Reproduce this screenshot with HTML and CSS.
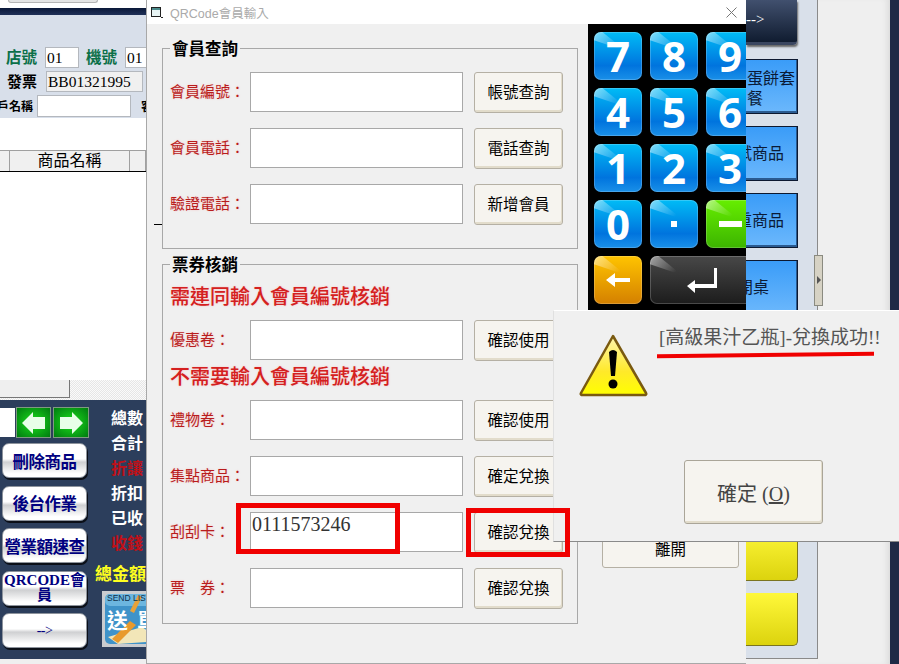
FILE: index.html
```html
<!DOCTYPE html>
<html>
  <head>
    <title>QRCode會員輸入</title>
    <link rel="stylesheet" href="styles.css">
  </head>
  <body>
    <div class="desktop">
      <!-- POS window behind the dialogs -->
      <div class="app">
        <div class="appLeft">
          <div class="topStrip"><div class="topTab"></div></div>
          <div class="navyBar"></div>
          <div class="infoPanel">
            <div class="infoRow">
              <span class="greenLabel">店號</span>
              <div class="infoField shopField">01</div>
              <span class="greenLabel">機號</span>
              <div class="infoField machineField">01</div>
            </div>
            <div class="infoRow invoiceRow">
              <span class="blackLabel">發票</span>
              <div class="infoField invoiceField">BB01321995</div>
            </div>
            <div class="infoRow customerRow">
              <span class="smallLabel">客戶名稱</span>
              <div class="infoField customerField"></div>
              <span class="smallLabel">客</span>
            </div>
          </div>
          <div class="whiteGap"></div>
          <div class="tableHead">
            <div class="headCell firstCell"></div>
            <div class="headCell nameCell">商品名稱</div>
            <div class="headCell"></div>
          </div>
          <div class="tableBody"></div>
          <div class="scrollRow"><div class="scrollThumb"></div></div>
          <div class="darkPanel">
            <div class="actionColumn">
              <div class="arrowRow">
                <div class="arrowBlank"></div>
                <div class="greenArrow">
                  <svg width="24" height="22" viewBox="0 0 24 22"><polygon points="0,11 11,0 11,5 23,5 23,17 11,17 11,22" fill="#e8ffe8"/></svg>
                </div>
                <div class="greenArrow">
                  <svg width="24" height="22" viewBox="0 0 24 22"><polygon points="24,11 13,0 13,5 1,5 1,17 13,17 13,22" fill="#e8ffe8"/></svg>
                </div>
              </div>
              <div class="actionBtn">刪除商品</div>
              <div class="actionBtn">後台作業</div>
              <div class="actionBtn">營業額速查</div>
              <div class="actionBtn wrapBtn">QRCODE會員</div>
              <div class="actionBtn arrowBtn">--&gt;</div>
            </div>
            <div class="totalsColumn">
              <div class="totalLine">總數</div>
              <div class="totalLine">合計</div>
              <div class="totalLine redLine">折讓</div>
              <div class="totalLine">折扣</div>
              <div class="totalLine">已收</div>
              <div class="totalLine redLine">收錢</div>
              <div class="grandTotal">總金額</div>
              <div class="sendCard">
                <svg width="70" height="56" viewBox="0 0 70 56">
                  <rect x="0" y="0" width="70" height="56" fill="#c9ccd0"/>
                  <rect x="3" y="3" width="64" height="50" rx="5" fill="#3f93c9"/>
                  <rect x="3" y="3" width="64" height="12" rx="5" fill="#6cb6df"/>
                  <polygon points="6,46 40,36 60,50 16,53" fill="#f2e6b8"/>
                  <polygon points="10,48 28,30 34,34 16,52" fill="#e89a2c"/>
                  <polygon points="28,20 36,4 40,6 32,22" fill="#e8a23a"/>
                  <text x="5" y="10" class="sendText">SEND LIST</text>
                  <text x="5" y="37" class="sendBig">送</text>
                  <text x="35" y="37" class="sendBig">單</text>
                </svg>
              </div>
            </div>
          </div>
        </div>
        <div class="appMiddle"></div>
        <div class="toolPanel">
          <div class="darkTool">--&gt;</div>
          <div class="blueTool wrapTool">蛋餅套餐</div>
          <div class="blueTool">試商品</div>
          <div class="blueTool">重商品</div>
          <div class="blueTool shortTool">開桌</div>
          <div class="yellowTool firstYellow"></div>
          <div class="yellowTool"></div>
          <div class="panelHandle"></div>
        </div>
        <div class="appMargin"></div>
        <div class="appEdge"></div>
      </div>

      <!-- QR code member dialog -->
      <div class="qrDialog">
        <div class="titleBar">
          <svg class="titleIcon" width="14" height="13" viewBox="0 0 14 13">
            <rect x="1.5" y="1.5" width="9" height="9" fill="#e8f4f4" stroke="#222"/>
            <rect x="2" y="2" width="8" height="2" fill="#4a8a8a"/>
            <path d="M11 11h2v1h-2z" fill="#222"/>
          </svg>
          <span class="titleText">QRCode會員輸入</span>
          <svg class="closeIcon" width="11" height="11" viewBox="0 0 11 11">
            <path d="M.5.5l10 10M10.5.5l-10 10" stroke="#777" fill="none"/>
          </svg>
        </div>
        <div class="qrBody">
          <div class="qrMain">
            <fieldset class="group">
              <legend>會員查詢</legend>
              <div class="row">
                <label class="rowLabel">會員編號：</label>
                <input class="rowInput" type="text">
                <button class="rowBtn">帳號查詢</button>
              </div>
              <div class="row">
                <label class="rowLabel">會員電話：</label>
                <input class="rowInput" type="text">
                <button class="rowBtn">電話查詢</button>
              </div>
              <div class="row">
                <label class="rowLabel">驗證電話：</label>
                <input class="rowInput" type="text">
                <button class="rowBtn">新增會員</button>
              </div>
            </fieldset>
            <fieldset class="group ticketGroup">
              <legend>票券核銷</legend>
              <div class="redHeading">需連同輸入會員編號核銷</div>
              <div class="row">
                <label class="rowLabel">優惠卷：</label>
                <input class="rowInput" type="text">
                <button class="rowBtn">確認使用</button>
              </div>
              <div class="redHeading">不需要輸入會員編號核銷</div>
              <div class="row">
                <label class="rowLabel">禮物卷：</label>
                <input class="rowInput" type="text">
                <button class="rowBtn">確認使用</button>
              </div>
              <div class="row">
                <label class="rowLabel">集點商品：</label>
                <input class="rowInput" type="text">
                <button class="rowBtn">確定兌換</button>
              </div>
              <div class="row">
                <label class="rowLabel">刮刮卡：</label>
                <input class="rowInput filledInput" type="text" value="0111573246">
                <button class="rowBtn">確認兌換</button>
              </div>
              <div class="row">
                <label class="rowLabel">票　券：</label>
                <input class="rowInput" type="text">
                <button class="rowBtn">確認兌換</button>
              </div>
            </fieldset>
          </div>
          <div class="qrSide">
            <div class="keypad">
              <div class="key">7</div>
              <div class="key">8</div>
              <div class="key">9</div>
              <div class="key">4</div>
              <div class="key">5</div>
              <div class="key">6</div>
              <div class="key">1</div>
              <div class="key">2</div>
              <div class="key">3</div>
              <div class="key">0</div>
              <div class="key"><span class="dotMark"></span></div>
              <div class="key greenKey"><span class="minusMark"></span></div>
              <div class="key orangeKey">
                <svg width="24" height="14" viewBox="0 0 24 14"><polygon points="0,7 9,0 9,5 24,5 24,9 9,9 9,14" fill="#fff"/></svg>
              </div>
              <div class="key enterKey">
                <svg width="31" height="25" viewBox="0 0 31 25"><polygon points="0,18 8,12 8,16 27,16 27,0 30,0 30,20 8,20 8,25" fill="#fff"/></svg>
              </div>
            </div>
            <button class="leaveBtn">離開</button>
          </div>
        </div>
        <div class="strayDash"></div>
      </div>

      <!-- message box -->
      <div class="msgBox">
        <div class="msgTop">
          <svg class="warnIcon" width="70" height="64" viewBox="0 0 70 64">
            <defs>
              <linearGradient id="warnFill" x1="0" y1="0" x2="0" y2="1">
                <stop offset="0" stop-color="#fff6b0"/>
                <stop offset="0.6" stop-color="#ffe92a"/>
                <stop offset="1" stop-color="#ffff00"/>
              </linearGradient>
            </defs>
            <path d="M34 2 L67 59 Q68 61 65 61 L4 61 Q1 61 2 59 Z" fill="url(#warnFill)" stroke="#7a5a10" stroke-width="2.5" stroke-linejoin="round"/>
            <path d="M30 18 Q34 14 38 18 L36 42 L32 42 Z" fill="#000"/>
            <circle cx="34" cy="50" r="4.5" fill="#000"/>
          </svg>
          <div class="msgText">[高級果汁乙瓶]-兌換成功!!</div>
        </div>
        <button class="msgBtn">確定 (<u>O</u>)</button>
      </div>

      <!-- red marks drawn on the screenshot -->
      <div class="redBox inputMark"></div>
      <div class="redBox buttonMark"></div>
      <div class="redLineMark"></div>
    </div>
  </body>
</html>
```

FILE: styles.css
```css
/* General Styles */
html, body {
  margin: 0;
  padding: 0;
}

body {
  background-color: #efefef;
  font-family: 'Liberation Serif', 'Noto Sans CJK TC', serif;
  color: #000000;
}

.desktop {
  position: relative;
  width: 899px;
  height: 664px;
  overflow: hidden;
}

/* POS window */
.app {
  display: flex;
  height: 664px;
  background-color: #efefef;
}

.appLeft {
  display: flex;
  flex-direction: column;
  width: 146px;
  height: 659px;
  overflow: hidden;
  flex-shrink: 0;
}

.appMiddle {
  width: 600px;
  flex-shrink: 0;
}

.topStrip {
  height: 8px;
  background-color: #ffffff;
}

.topTab {
  width: 88px;
  height: 2px;
  margin-left: 8px;
  background-color: #e4e4e4;
  border: 1px solid #b5b5b5;
  border-top: none;
  border-radius: 0 0 4px 4px;
}

.navyBar {
  height: 7px;
  background: linear-gradient(#0a1838, #1f3058);
}

.infoPanel {
  display: flex;
  flex-direction: column;
  gap: 3px;
  height: 103px;
  box-sizing: border-box;
  padding-top: 32px;
  background-color: #d8dfea;
}

.infoRow {
  display: flex;
  align-items: center;
  height: 21px;
  white-space: nowrap;
}

.infoRow:first-child {
  padding-left: 6px;
}

.greenLabel {
  font-size: 15.5px;
  font-weight: bold;
  color: #0b7048;
  margin: 0 8px 3px 0;
  flex-shrink: 0;
}

.shopField {
  margin-right: 7px;
}

.blackLabel {
  font-size: 15px;
  font-weight: bold;
  margin: 0 9px 3px 0;
}

.invoiceRow {
  padding-left: 7px;
}

.smallLabel {
  font-size: 12px;
  font-weight: bold;
  flex-shrink: 0;
}

.customerRow {
  height: 22px;
  margin-left: -15px;
}

.infoField {
  box-sizing: border-box;
  height: 21px;
  padding-left: 1px;
  background-color: #ffffff;
  border: 1px solid #b4b8be;
  font-size: 15.5px;
  line-height: 19px;
  flex-shrink: 0;
}

.shopField { width: 34px; }
.machineField { width: 40px; }

.invoiceField {
  width: 97px;
  background-color: #f0f0f0;
}

.customerField {
  width: 94px;
  height: 22px;
  margin: 0 10px 0 4px;
}

.whiteGap {
  height: 32px;
  background-color: #ffffff;
}

.tableHead {
  display: flex;
  height: 22px;
  box-sizing: border-box;
  background-color: #f0f0f0;
  border-top: 1px solid #a0a0a0;
  border-bottom: 1px solid #000000;
}

.headCell {
  flex: 1;
  border-right: 1px solid #a0a0a0;
  font-size: 16px;
  line-height: 20px;
  text-align: center;
}

.firstCell { flex: 0 0 10px; box-sizing: border-box; }
.nameCell { flex: 0 0 120px; box-sizing: border-box; }

.tableBody {
  flex: 1;
  background-color: #ffffff;
}

.scrollRow {
  height: 20px;
  background: repeating-conic-gradient(#e6e6e6 0 25%, #fafafa 0 50%) 0 0 / 2px 2px;
}

.scrollThumb {
  width: 70px;
  height: 18px;
  box-sizing: border-box;
  background-color: #efefef;
  border-right: 1px solid #777777;
  border-bottom: 1px solid #777777;
}

/* Dark panel at the bottom left */
.darkPanel {
  display: flex;
  height: 259px;
  background-color: #2c3e5c;
}

.actionColumn {
  display: flex;
  flex-direction: column;
  gap: 7.5px;
  width: 91px;
  flex-shrink: 0;
  padding-top: 7px;
}

.arrowRow {
  display: flex;
  align-items: center;
  height: 31px;
  margin-bottom: -2.5px;
}

.arrowBlank {
  width: 15px;
  height: 29px;
  margin-right: 1px;
  background-color: #ffffff;
}

.greenArrow {
  display: flex;
  justify-content: center;
  align-items: center;
  width: 36px;
  height: 31px;
  box-sizing: border-box;
  margin-right: 2px;
  background: radial-gradient(#1ce01c, #007a10);
  border: 1px solid #7f9a80;
}

.actionBtn {
  display: flex;
  justify-content: center;
  align-items: center;
  box-sizing: border-box;
  width: 85px;
  height: 35px;
  margin-left: 2px;
  background: linear-gradient(#ffffff 0%, #ffffff 45%, #cfd0d2 55%, #ffffff 90%);
  border: 1px solid #8d939c;
  border-radius: 7px;
  box-shadow: 1px 2px 0 #0b0f18;
  font-size: 16.5px;
  font-weight: bold;
  color: #000080;
  white-space: nowrap;
  letter-spacing: -0.5px;
}

.wrapBtn {
  font-size: 15px;
  line-height: 15px;
  white-space: normal;
  text-align: center;
  word-break: break-all;
  letter-spacing: 0;
}

.arrowBtn {
  font-size: 14px;
  font-weight: normal;
}

.totalsColumn {
  flex-shrink: 0;
  width: 80px;
  margin-left: 4px;
  padding-top: 7px;
}

.totalLine {
  height: 25px;
  line-height: 24px;
  padding-left: 16px;
  font-size: 16px;
  font-weight: bold;
  color: #ffffff;
  white-space: nowrap;
}

.redLine {
  color: #c01018;
}

.grandTotal {
  height: 28px;
  margin-top: 6px;
  line-height: 24px;
  font-size: 17px;
  font-weight: bold;
  color: #ffff20;
  white-space: nowrap;
}

.sendCard {
  margin-left: 7px;
  height: 56px;
}

.sendCard svg {
  display: block;
}

.sendText {
  font-family: 'Liberation Sans', sans-serif;
  font-size: 8.5px;
  fill: #10304a;
}

.sendBig {
  font-family: 'Noto Sans CJK TC', sans-serif;
  font-size: 21px;
  font-weight: bold;
  fill: #ffffff;
}

/* Tool buttons at the right */
.toolPanel {
  position: relative;
  display: flex;
  flex-direction: column;
  align-items: flex-start;
  gap: 12px;
  width: 72px;
  height: 659px;
  box-sizing: border-box;
  padding-bottom: 12px;
  flex-shrink: 0;
  background-color: #d9e0ea;
  border-right: 1px solid #8a8a8a;
  border-bottom: 1px solid #8a8a8a;
}

.darkTool {
  width: 51px;
  height: 45px;
  box-sizing: border-box;
  padding-top: 11px;
  margin-bottom: 2px;
  background: linear-gradient(#41506e, #101c30);
  border-bottom: 3px solid #3a4660;
  border-radius: 0 0 4px 0;
  box-shadow: 1px 2px 2px #666666;
  font-size: 15px;
  color: #ffffff;
}

/* these run on under the dialog, only the right end is seen */
.blueTool {
  width: 72px;
  height: 55px;
  box-sizing: border-box;
  margin-left: -20px;
  padding-right: 13px;
  background: linear-gradient(#3a9cf8, #6cb8fc);
  border: 1px solid #0c1830;
  box-shadow: inset -1px -2px 0 #2a5a90;
  font-family: 'Noto Sans CJK TC', sans-serif;
  font-size: 16px;
  line-height: 51px;
  color: #0a1a36;
  text-align: right;
  white-space: nowrap;
  overflow: hidden;
}

.wrapTool {
  padding: 7px 0 0 20px;
  line-height: 20px;
  text-align: left;
  white-space: normal;
}

.shortTool {
  padding-right: 28px;
}

.yellowTool {
  width: 52px;
  height: 53px;
  box-sizing: border-box;
  background: linear-gradient(#fff83a, #dcd30e);
  border-right: 1px solid #7a7420;
  border-bottom: 1px solid #7a7420;
  border-radius: 0 0 5px 0;
}

.firstYellow {
  margin-top: auto;
}

.panelHandle {
  position: absolute;
  top: 255px;
  left: 68px;
  width: 7px;
  height: 49px;
  background-color: #d6d2c4;
  border: 1px solid #8a8a80;
}

.panelHandle::after {
  content: '';
  position: absolute;
  top: 20px;
  left: 2px;
  border-left: 4px solid #555555;
  border-top: 4px solid transparent;
  border-bottom: 4px solid transparent;
}

.appMargin {
  width: 72px;
  flex-shrink: 0;
  box-shadow: inset -6px 0 6px -4px #d8d8d8;
}

.appEdge {
  width: 9px;
  flex-shrink: 0;
  background-color: #1f2a46;
}

/* QR dialog */
.qrDialog {
  position: absolute;
  top: 0;
  left: 146px;
  display: flex;
  flex-direction: column;
  width: 600px;
  height: 664px;
  box-sizing: border-box;
  background-color: #f0f0f0;
  border-left: 1px solid #a8a8a8;
  border-bottom: 1px solid #a8a8a8;
}

.titleBar {
  display: flex;
  align-items: center;
  height: 24px;
  flex-shrink: 0;
  padding-left: 3px;
  background-color: #ffffff;
}

.titleIcon {
  margin-right: 6px;
}

.titleText {
  flex: 1;
  font-family: 'Liberation Sans', 'Noto Sans CJK TC', sans-serif;
  font-size: 12.5px;
  color: #aaaaaa;
}

.closeIcon {
  margin-right: 9px;
}

.qrBody {
  display: flex;
  flex: 1;
}

.qrMain {
  width: 441px;
  box-sizing: border-box;
  padding: 12px 10px 0 15px;
  flex-shrink: 0;
}

.group {
  width: 416px;
  box-sizing: border-box;
  margin: 0 0 3px 0;
  padding: 12px 0 24px 7px;
  border: 1px solid #a8a8a8;
}

.group legend {
  height: 24px;
  padding: 0 2px;
  font-family: 'Noto Sans CJK TC', sans-serif;
  font-size: 16.5px;
  font-weight: bold;
  line-height: 24px;
}

.ticketGroup {
  padding-top: 4px;
  padding-bottom: 15px;
}

.row {
  display: flex;
  align-items: center;
  height: 40px;
}

.row + .row {
  margin-top: 16px;
}

.rowLabel {
  width: 80px;
  flex-shrink: 0;
  margin-bottom: 4px;
  font-family: 'Noto Sans CJK TC', sans-serif;
  font-size: 15px;
  color: #b81c1c;
  text-shadow: 0 0 2px rgba(255, 120, 120, 0.4);
  white-space: nowrap;
}

.rowInput {
  width: 213px;
  height: 40px;
  box-sizing: border-box;
  margin: 0 11px 0 0;
  padding: 0 1px;
  background-color: #ffffff;
  border: 1px solid #a8a8a8;
  border-radius: 0;
  outline: none;
  font-family: 'Liberation Serif', serif;
}

.filledInput {
  padding-bottom: 15px;
  font-size: 20px;
  color: #333333;
}

.rowBtn {
  width: 89px;
  height: 41px;
  padding: 0 0 2px 0;
  background-color: #f6f4ef;
  border: 1px solid #b5b0a4;
  border-radius: 3px;
  box-shadow: inset -1px -2px 0 #e2dccb;
  font-family: 'Noto Sans CJK TC', sans-serif;
  font-size: 15.5px;
  color: #000000;
}

.redHeading {
  height: 40px;
  font-family: 'Noto Sans CJK TC', sans-serif;
  font-size: 20px;
  font-weight: 500;
  line-height: 32px;
  color: #d42020;
  text-shadow: 0 0 2px rgba(255, 120, 120, 0.4);
  white-space: nowrap;
}

.qrSide {
  width: 158px;
  flex-shrink: 0;
  overflow: hidden;
}

.keypad {
  display: grid;
  grid-template-columns: repeat(3, 48px);
  grid-auto-rows: 48px;
  gap: 8px;
  height: 286px;
  box-sizing: border-box;
  padding: 8px 0 0 6px;
  background-color: #000000;
}

.key {
  position: relative;
  display: flex;
  justify-content: center;
  align-items: center;
  border-radius: 7px;
  overflow: hidden;
  background: linear-gradient(#00bcf6, #0074de 70%, #1a90e8);
  box-shadow: inset 0 0 0 1px rgba(255, 255, 255, 0.2);
  font-family: 'Open Sans', sans-serif;
  font-size: 42px;
  font-weight: bold;
  line-height: 48px;
  color: #ffffff;
}

.key::before {
  content: '';
  position: absolute;
  top: -10px;
  left: -14px;
  width: 44px;
  height: 26px;
  background: linear-gradient(90deg, rgba(255, 255, 255, 0.75), rgba(255, 255, 255, 0));
  transform: rotate(32deg);
  clip-path: polygon(0 30%, 100% 50%, 100% 60%, 0 100%);
}

.greenKey {
  background: linear-gradient(#66ee00, #3cb400);
}

.orangeKey {
  background: linear-gradient(#ffc400, #d48000);
}

.enterKey {
  grid-column: span 2;
  width: 104px;
  background: linear-gradient(#484848, #1c1c1c);
}

.dotMark {
  width: 6px;
  height: 6px;
  background-color: #ffffff;
}

.minusMark {
  width: 23px;
  height: 6px;
  background-color: #ffffff;
}

.leaveBtn {
  display: block;
  width: 137px;
  height: 38px;
  margin: 220px 0 0 14px;
  padding: 0 0 2px 0;
  background-color: #f6f4ef;
  border: 1px solid #b5b0a4;
  border-radius: 3px;
  font-family: 'Noto Sans CJK TC', sans-serif;
  font-size: 15.5px;
  color: #000000;
}

.strayDash {
  position: absolute;
  top: 224px;
  left: 7px;
  width: 8px;
  height: 1px;
  background-color: #000000;
}

/* Message box */
.msgBox {
  position: absolute;
  top: 310px;
  left: 553px;
  width: 346px;
  height: 232px;
  box-sizing: border-box;
  background-color: #f0f0f0;
  border-top: 1px solid #ffffff;
  border-left: 1px solid #e0e0e0;
  border-bottom: 1px solid #8a8a8a;
}

.msgTop {
  display: flex;
  align-items: flex-start;
  height: 149px;
}

.warnIcon {
  margin: 23px 10px 0 25px;
  flex-shrink: 0;
}

.msgText {
  margin-top: 13px;
  font-family: 'Liberation Serif', 'Noto Sans CJK TC', serif;
  font-size: 19px;
  line-height: 28px;
  color: #555555;
  white-space: nowrap;
}

.msgBtn {
  display: block;
  width: 139px;
  height: 64px;
  margin-left: 130px;
  padding: 0;
  background-color: #f6f4ef;
  border: 1px solid #aaa598;
  border-radius: 3px;
  box-shadow: inset -1px -2px 0 #e2dccb;
  font-family: 'Liberation Serif', 'Noto Sans CJK TC', serif;
  font-size: 20px;
  color: #444444;
}

/* Red marks */
.redBox {
  position: absolute;
  box-sizing: border-box;
  border: 5px solid #f00000;
}

.inputMark {
  top: 503px;
  left: 236px;
  width: 164px;
  height: 51px;
}

.buttonMark {
  top: 508px;
  left: 466px;
  width: 104px;
  height: 49px;
}

.redLineMark {
  position: absolute;
  top: 353px;
  left: 657px;
  width: 217px;
  height: 4px;
  background-color: #f00000;
  transform: rotate(-0.6deg);
}
```
